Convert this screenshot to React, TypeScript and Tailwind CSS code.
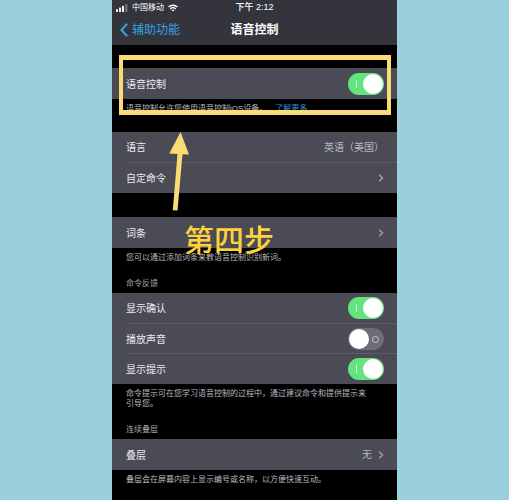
import { useState, type ReactNode } from "react";

function Chevron() {
  return (
    <svg viewBox="0 0 6 8" className="h-2 w-1.5 shrink-0" fill="none" stroke="#a9aab2" strokeWidth="1.2" aria-hidden="true">
      <path d="M1.2 0.8 4.6 4 1.2 7.2" />
    </svg>
  );
}

function Group({ children }: { children: ReactNode }) {
  return (
    <div className="flex flex-col bg-[#4a4b55] *:ml-3.5 *:h-[30px] *:border-t *:border-[#5b5c65] *:pr-[13px] *:first:border-t-0 *:last:h-[31px]">
      {children}
    </div>
  );
}

function Toggle({ id, label, initial }: { id: string; label: string; initial: boolean }) {
  const [on, setOn] = useState(initial);
  return (
    <div className="flex items-center justify-between text-[10px]">
      <label htmlFor={id} className="pt-px">{label}</label>
      <span className="relative flex h-[22px] w-9">
        <input
          id={id}
          type="checkbox"
          checked={on}
          onChange={(e) => setOn(e.target.checked)}
          className="peer h-full w-full cursor-pointer appearance-none rounded-full bg-[#6c6d79] checked:bg-[#64e47e]"
        />
        <span className="pointer-events-none absolute top-px left-px size-5 rounded-full bg-white peer-checked:left-[15px]" />
        {on ? (
          <span className="pointer-events-none absolute top-[7px] left-2 h-2 w-px bg-[#d5fadc]" />
        ) : (
          <span className="pointer-events-none absolute top-2 right-[5px] size-[7px] rounded-full border border-[#c6c7cd]" />
        )}
      </span>
    </div>
  );
}

function LinkRow({ label, value, chevron = true }: { label: string; value?: string; chevron?: boolean }) {
  return (
    <button type="button" className="flex items-center justify-between text-left text-[10px]">
      <span className="pt-px">{label}</span>
      <span className="flex items-center gap-1.5 text-[#b6b7be]">
        {value}
        {chevron && <Chevron />}
      </span>
    </button>
  );
}

function Note({ children }: { children: ReactNode }) {
  return <p className="pt-[5px] pr-7 pl-3.5 text-[8px] leading-[10px] text-[#b8b9c0]">{children}</p>;
}

function Heading({ children }: { children: ReactNode }) {
  return <h2 className="px-3.5 pb-1 text-[8px] leading-[10px] text-[#a3a4ab]">{children}</h2>;
}

export default function App() {
  return (
    <div className="min-h-screen bg-[#9acfde] px-28 font-['Liberation_Sans','Noto_Sans_CJK_SC',sans-serif]">
      <main className="relative flex min-h-screen flex-col bg-black text-[#ececf0]">
        <header className="h-[45px] bg-[#34353c] text-white">
          <div className="grid h-[15px] grid-cols-[1fr_auto_1fr] items-center px-1 text-[9px] leading-[15px]">
            <div className="flex items-center gap-1">
              <svg viewBox="0 0 12 8" className="h-2 w-3" fill="#f2f2f4" aria-hidden="true">
                <rect x="0" y="5" width="2" height="3" rx=".5" />
                <rect x="3" y="3.5" width="2" height="4.5" rx=".5" />
                <rect x="6" y="1.8" width="2" height="6.2" rx=".5" />
                <rect x="9.3" y="0" width="2" height="8" rx=".5" fill="#777880" />
              </svg>
              <span className="text-[8px]">中国移动</span>
              <svg viewBox="0 0 12 9" className="h-2 w-2.5" fill="none" stroke="#fff" strokeWidth="1.7" aria-hidden="true">
                <path d="M.7 3.4a7.6 7.6 0 0 1 10.6 0M2.7 5.6a4.7 4.7 0 0 1 6.6 0" />
                <path d="M6 8.8 4.3 7.1a2.4 2.4 0 0 1 3.4 0Z" fill="#fff" stroke="none" />
              </svg>
            </div>
            <span className="font-medium">下午 2:12</span>
          </div>
          <div className="grid h-[30px] grid-cols-[1fr_auto_1fr] items-center px-2 text-xs">
            <button type="button" className="flex items-center gap-1 text-[#36a1e6]">
              <svg viewBox="0 0 8 14" className="h-3.5 w-2" fill="none" stroke="currentColor" strokeWidth="2" aria-hidden="true">
                <path d="M7.2.8 1.4 7l5.800 6.200" />
              </svg>
              辅助功能
            </button>
            <h1 className="font-bold">语音控制</h1>
          </div>
        </header>

        <section className="pt-[23px]">
          <Group>
            <Toggle id="voice" label="语音控制" initial />
          </Group>
          <Note>
            语音控制允许您使用语音控制iOS设备。
            <a href="#more" className="ml-2 text-[#2f8fe0]">了解更多</a>
          </Note>
        </section>

        <section className="pt-[18px]">
          <Group>
            <LinkRow label="语言" value="英语（美国）" chevron={false} />
            <LinkRow label="自定命令" />
          </Group>
        </section>

        <section className="pt-6">
          <Group>
            <LinkRow label="词条" />
          </Group>
          <Note>您可以通过添加词条来教语音控制识别新词。</Note>
        </section>

        <section className="pt-4">
          <Heading>命令反馈</Heading>
          <Group>
            <Toggle id="confirm" label="显示确认" initial />
            <Toggle id="sound" label="播放声音" initial={false} />
            <Toggle id="hints" label="显示提示" initial />
          </Group>
          <Note>命令提示可在您学习语音控制的过程中，通过建议命令和提供提示来引导您。</Note>
        </section>

        <section className="pt-4">
          <Heading>连续叠层</Heading>
          <Group>
            <LinkRow label="叠层" value="无" />
          </Group>
          <Note>叠层会在屏幕内容上显示编号或名称，以方便快速互动。</Note>
        </section>

        <div className="pointer-events-none absolute top-[55px] right-1.5 left-[7px] h-[60px] border-x-4 border-y-5 border-[#fbdc74]" />
        <svg viewBox="0 0 20 80" className="pointer-events-none absolute top-[132px] left-[57px] h-20 w-5" fill="#fbdc74" aria-hidden="true">
          <path d="M11.500 0 20 22.500 13.500 22.300 8.500 78.500 3.800 78.200 8.500 22.100 .3 21.500Z" />
        </svg>
        <strong className="pointer-events-none absolute top-[226px] left-[72px] text-[30px] leading-[30px] font-medium text-[#fdd23b]">
          第四步
        </strong>
      </main>
    </div>
  );
}
